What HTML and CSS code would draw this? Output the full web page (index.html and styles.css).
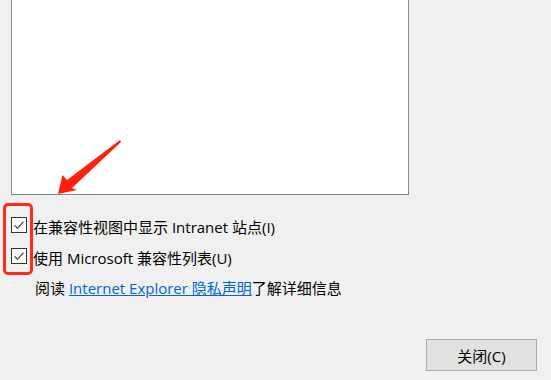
FILE: index.html
```html
<!DOCTYPE html>
<html>
<head>
    <title>兼容性视图设置</title>
    <link rel="stylesheet" href="styles.css">
</head>
<body>
    <div class="dialog">
        <div class="site-list"></div>

        <div class="options">
            <label class="option">
                <span class="check">
                    <svg width="16" height="16" viewBox="0 0 16 16"><rect x="0.5" y="0.5" width="15" height="15" fill="#fff" stroke="#333"/><path d="M3.5 8.2 L6.5 11.2 L12.5 4.8" fill="none" stroke="#555" stroke-width="1.3"/></svg>
                </span>
                在兼容性视图中显示 Intranet 站点(I)
            </label>
            <label class="option">
                <span class="check">
                    <svg width="16" height="16" viewBox="0 0 16 16"><rect x="0.5" y="0.5" width="15" height="15" fill="#fff" stroke="#333"/><path d="M3.5 8.2 L6.5 11.2 L12.5 4.8" fill="none" stroke="#555" stroke-width="1.3"/></svg>
                </span>
                使用 Microsoft 兼容性列表(U)
            </label>
            <p class="privacy">阅读 <a href="#">Internet Explorer 隐私声明</a>了解详细信息</p>
        </div>

        <div class="footer">
            <button type="button">关闭(C)</button>
        </div>

        <!-- annotations drawn over the screenshot -->
        <div class="highlight"></div>
        <svg class="arrow" width="551" height="380" viewBox="0 0 551 380">
            <polygon points="120,140 67,180 62.5,175 58,194 77,190 72,188 121,142" fill="#ff2010"/>
        </svg>
    </div>
</body>
</html>
```

FILE: styles.css
```css
body {
    margin: 0;
    background: #f0f0f0;
    font-family: "Open Sans", "Noto Sans CJK SC", sans-serif;
    font-size: 15px;
    color: #000;
}
.dialog {
    position: relative;
    width: 551px;
    height: 380px;
    overflow: hidden;
}
.site-list {
    margin-left: 11px;
    width: 396px;
    height: 194px;
    background: #fff;
    border: 1px solid #828790;
    border-top: none;
}
.options {
    padding-top: 16px;
    padding-left: 11px;
}
.option {
    display: flex;
    align-items: center;
    height: 31px;
}
.check {
    display: flex;
    width: 22px;
    margin-top: -4px;
}
.privacy {
    margin: 0;
    height: 31px;
    line-height: 31px;
    padding-left: 24px;
}
.privacy a {
    color: #0066cc;
}
.footer {
    display: flex;
    justify-content: flex-end;
    padding-right: 14px;
    margin-top: 35px;
}
button {
    width: 111px;
    height: 32px;
    background: #e1e1e1;
    border: 1px solid #adadad;
    font-family: inherit;
    font-size: 15px;
    color: #000;
}
.highlight {
    position: absolute;
    left: 3px;
    top: 203px;
    width: 24px;
    height: 66px;
    border: 3px solid #ff2a1a;
    border-radius: 5px;
}
.arrow {
    position: absolute;
    left: 0;
    top: 0;
}
```
